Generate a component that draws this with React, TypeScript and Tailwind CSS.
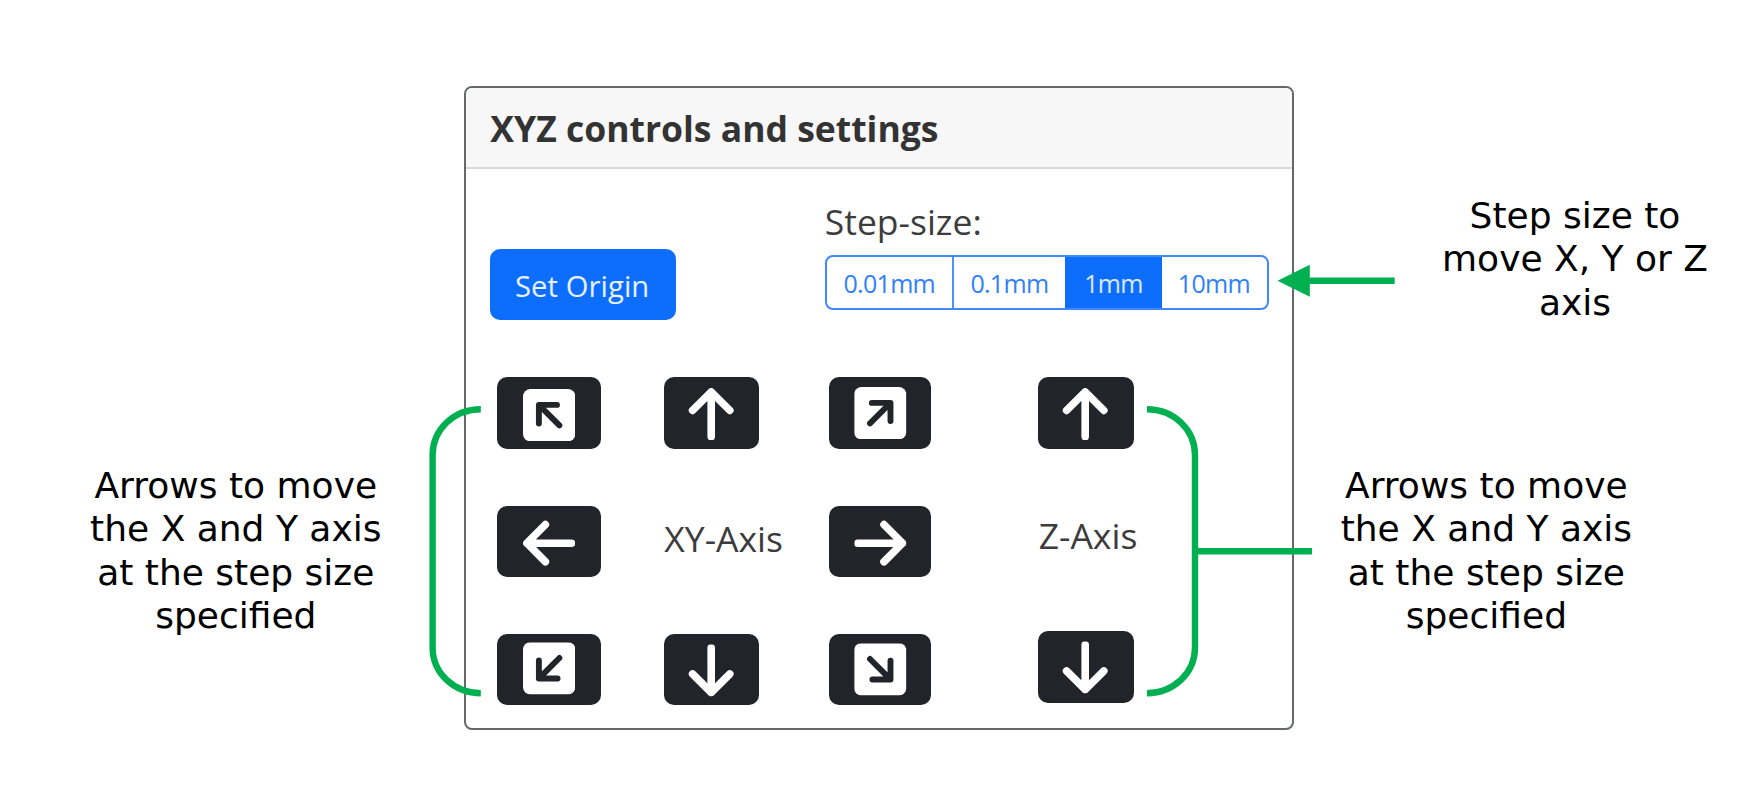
import React from "react";

type Dir = "up" | "right" | "down" | "left";

const arrowTurn: Record<Dir, string> = {
  left: "rotate-0",
  up: "rotate-90",
  right: "rotate-180",
  down: "-rotate-90",
};

function Arrow({ dir, className = "" }: { dir: Dir; className?: string }) {
  return (
    <svg viewBox="0 0 52.4 52.4" className={`h-[52.4px] w-[52.4px] shrink-0 ${arrowTurn[dir]} ${className}`}>
      <path
        d="M48.6 26.2H4M22.4 7.6L3.9 26.2L22.4 44.8"
        fill="none"
        stroke="#fff"
        strokeWidth="7.6"
        strokeLinecap="round"
        strokeLinejoin="round"
      />
    </svg>
  );
}

const squareTurn = {
  nw: "rotate-0",
  ne: "rotate-90",
  se: "rotate-180",
  sw: "-rotate-90",
};

function SquareArrow({ dir, className = "" }: { dir: keyof typeof squareTurn; className?: string }) {
  return (
    <svg viewBox="0 0 52.4 52.4" className={`h-[52.4px] w-[52.4px] shrink-0 ${squareTurn[dir]} ${className}`}>
      <rect width="52.4" height="52.4" rx="7.5" fill="#fff" />
      <path
        d="M15.9 34.6V15.9H34M16.5 16.5L36.4 36.4"
        fill="none"
        stroke="#212529"
        strokeWidth="5.9"
        strokeLinecap="round"
        strokeLinejoin="round"
      />
      <path d="M14 14H23L14 23Z" fill="#212529" />
    </svg>
  );
}

function PadButton({ className, children }: { className: string; children: React.ReactNode }) {
  return (
    <button className={`flex items-start justify-center rounded-[10px] bg-[#212529] ${className}`}>
      {children}
    </button>
  );
}

function Callout({ lines, className }: { lines: string[]; className: string }) {
  return (
    <p
      className={`text-center font-['DejaVu_Sans',sans-serif] text-[36px] leading-[43.3px] whitespace-nowrap text-black ${className}`}
    >
      {lines.map((line) => (
        <span key={line} className="block">
          {line}
        </span>
      ))}
    </p>
  );
}

const moveLines = ["Arrows to move", "the X and Y axis", "at the step size", "specified"];

export default function App() {
  return (
    <div className="relative flex h-[803px] w-[1748px] items-start overflow-hidden bg-white font-['Open_Sans',sans-serif] text-[#3c3c3c]">
      <div className="w-[464.3px] shrink-0 pt-[464.1px]">
        <Callout lines={moveLines} className="ml-[85.8px] w-[300px]" />
      </div>

      <section className="mt-[85.5px] h-[644.8px] w-[830.2px] shrink-0 overflow-hidden rounded-[8px] border-2 border-[#66696c] bg-white">
        <header className="flex h-[81.5px] items-center border-b-2 border-[#d8d8d8] bg-[#f7f7f7] pt-[2px] pl-[24px]">
          <h1 className="text-[35.5px] leading-[48px] font-bold text-[#333]">XYZ controls and settings</h1>
        </header>

        <div className="flex h-[208px] pl-[23.7px]">
          <button className="mt-[80px] h-[70.7px] w-[186.3px] rounded-[10px] bg-[#0d6efd] pt-[5px] pr-[2px] text-[29.2px] tracking-[0.1px] text-white/90">
            Set Origin
          </button>
          <div className="ml-[148.5px] pt-[27.6px]">
            <div className="h-[58.4px] text-[35.5px] leading-[48px]">Step-size:</div>
            <div className="flex h-[55px] w-[444px] overflow-hidden rounded-[8px] border-2 border-[#4089fd] text-[25px] tracking-[-0.7px] text-[#2f80fd]">
              <div className="flex w-[127px] items-center justify-center border-r-2 border-[#4d93fd] pt-[2px]">0.01mm</div>
              <div className="flex w-[111.2px] items-center justify-center pt-[2px]">0.1mm</div>
              <div className="flex w-[97px] items-center justify-center bg-[#0d6efd] pt-[2px] text-white/85">1mm</div>
              <div className="flex grow items-center justify-center pt-[2px] pr-[1px]">10mm</div>
            </div>
          </div>
        </div>

        <div className="flex pl-[31px]">
          <div className="grid grid-cols-[167px_164.7px_102.5px] grid-rows-[129px_127.2px_71px]">
            <PadButton className="h-[72px] w-[103.7px] pt-[12px]">
              <SquareArrow dir="nw" />
            </PadButton>
            <PadButton className="h-[72px] w-[94.5px] pt-[10.6px]">
              <Arrow dir="up" className="mr-[1.6px]" />
            </PadButton>
            <PadButton className="h-[72px] w-[102.3px] pt-[10.2px]">
              <SquareArrow dir="ne" />
            </PadButton>
            <PadButton className="h-[71px] w-[103.7px] pt-[10.6px]">
              <Arrow dir="left" />
            </PadButton>
            <div className="pt-[7.6px] text-[35.5px] leading-[48px] whitespace-nowrap">XY-Axis</div>
            <PadButton className="h-[71px] w-[102.3px] pt-[10.6px]">
              <Arrow dir="right" />
            </PadButton>
            <PadButton className="mt-[0.4px] h-[71px] w-[103.7px] pt-[8.4px]">
              <SquareArrow dir="sw" />
            </PadButton>
            <PadButton className="mt-[0.4px] h-[71px] w-[94.5px] pt-[10.6px]">
              <Arrow dir="down" className="mr-[1.6px]" />
            </PadButton>
            <PadButton className="mt-[0.4px] h-[71px] w-[102.3px] pt-[9.2px]">
              <SquareArrow dir="se" />
            </PadButton>
          </div>

          <div className="ml-[106.2px] flex w-[96.2px] flex-col">
            <PadButton className="h-[72px] w-[96px] pt-[10.6px]">
              <Arrow dir="up" />
            </PadButton>
            <div className="mt-[61.8px] h-[120px] pl-[1px] text-[35.5px] leading-[48px] whitespace-nowrap">Z-Axis</div>
            <PadButton className="h-[72px] w-[96px] pt-[10.4px]">
              <Arrow dir="down" />
            </PadButton>
          </div>
        </div>
      </section>

      <div className="flex grow flex-col pt-[194px]">
        <Callout lines={["Step size to", "move X, Y or Z", "axis"]} className="ml-[130.5px] h-[270.1px] w-[300px]" />
        <Callout lines={moveLines} className="ml-[41.9px] w-[300px]" />
      </div>

      {/* Green annotation brackets and pointer, drawn over the card */}
      <svg viewBox="0 0 1748 803" className="pointer-events-none absolute inset-0 h-[803px] w-[1748px]">
        <g fill="none" stroke="#00b050" strokeWidth="6.4">
          <path d="M480.8 409.2C454 409.2 432.6 429.5 432.6 455V647.5C432.6 673 454 693.2 480.8 693.2" />
          <path d="M1147 409.2C1173.5 409.2 1195 429.5 1195 455V647.5C1195 673 1173.5 693.2 1147 693.2" />
          <path d="M1195 551.2H1312" />
          <path d="M1305 280.7H1394.7" />
        </g>
        <path d="M1277.5 280.7L1309.8 264.7V296.7Z" fill="#00b050" />
      </svg>
    </div>
  );
}
